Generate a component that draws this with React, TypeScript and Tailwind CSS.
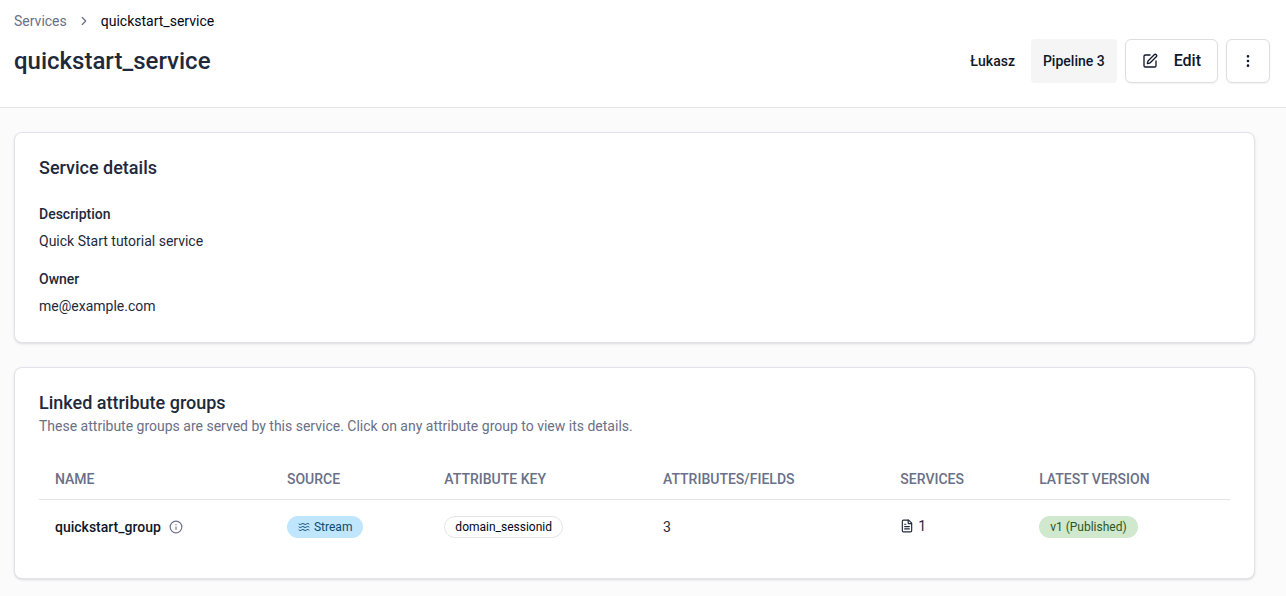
import React from "react";
import {
  ChevronRight,
  EllipsisVertical,
  FileText,
  Info,
  SquarePen,
  Waves,
} from "lucide-react";

interface AttributeGroup {
  name: string;
  source: string;
  attributeKey: string;
  fields: number;
  services: number;
  latestVersion: string;
}

const groups: AttributeGroup[] = [
  {
    name: "quickstart_group",
    source: "Stream",
    attributeKey: "domain_sessionid",
    fields: 3,
    services: 1,
    latestVersion: "v1 (Published)",
  },
];

const columns = [
  "Name",
  "Source",
  "Attribute key",
  "Attributes/Fields",
  "Services",
  "Latest version",
];

const badge =
  "inline-flex h-[22px] items-center gap-1 rounded-full border px-2.5 text-xs";

function Card({ children }: { children: React.ReactNode }) {
  return (
    <section className="rounded-lg border border-[#e2e3e8] bg-white p-6 shadow-sm">
      {children}
    </section>
  );
}

function Detail({ label, value }: { label: string; value: string }) {
  return (
    <div className="flex flex-col gap-[7px]">
      <dt className="font-medium">{label}</dt>
      <dd>{value}</dd>
    </div>
  );
}

export default function App() {
  return (
    <div className="min-h-screen bg-[#fbfbfb] font-[Roboto,sans-serif] text-sm text-[#1e293b]">
      <header className="border-b border-[#e4e4e7] bg-white pt-[11px] pr-4 pb-6 pl-3.5">
        <nav aria-label="Breadcrumb">
          <ol className="flex items-center gap-2.5">
            <li>
              <a href="#services" className="text-[#697087]">
                Services
              </a>
            </li>
            <li aria-hidden="true" className="text-[#697087]">
              <ChevronRight size={14} />
            </li>
            <li aria-current="page" className="text-[#020617]">
              quickstart_service
            </li>
          </ol>
        </nav>
        <div className="mt-2 flex items-center justify-between">
          <h1 className="text-2xl font-medium">quickstart_service</h1>
          <div className="flex items-center gap-2 font-medium text-[#0f172a]">
            <span className="px-2">Łukasz</span>
            <span className="flex h-11 items-center rounded-sm bg-[#f5f5f5] px-3">
              Pipeline 3
            </span>
            <button
              type="button"
              className="flex h-11 items-center gap-4 rounded-md border border-[#dedee0] bg-white px-4 text-base font-medium shadow-xs"
            >
              <SquarePen size={16} />
              Edit
            </button>
            <button
              type="button"
              aria-label="More actions"
              className="flex size-11 items-center justify-center rounded-md border border-[#dedee0] bg-white shadow-xs"
            >
              <EllipsisVertical size={16} />
            </button>
          </div>
        </div>
      </header>

      <main className="flex flex-col gap-6 py-6 pr-[31px] pl-3.5">
        <Card>
          <h2 className="text-lg leading-[22px] font-medium">
            Service details
          </h2>
          <dl className="mt-[25px] mb-0.5 flex flex-col gap-[18px]">
            <Detail label="Description" value="Quick Start tutorial service" />
            <Detail label="Owner" value="me@example.com" />
          </dl>
        </Card>

        <Card>
          <h2 className="text-lg leading-[22px] font-medium">
            Linked attribute groups
          </h2>
          <p className="mt-0.5 text-[#697087]">
            These attribute groups are served by this service. Click on any
            attribute group to view its details.
          </p>
          <table className="mt-[23px] w-full text-left">
            <thead>
              <tr className="border-b border-[#e4e4e7]">
                {columns.map((column) => (
                  <th
                    key={column}
                    className="h-10 px-4 font-medium whitespace-nowrap text-[#697087] uppercase"
                  >
                    {column}
                  </th>
                ))}
              </tr>
            </thead>
            <tbody>
              {groups.map((group) => (
                <tr key={group.name} className="h-[55px]">
                  <td className="px-4">
                    <div className="flex items-center gap-2">
                      <span className="font-medium text-[#0f172a]">
                        {group.name}
                      </span>
                      <Info size={14} className="text-[#697087]" />
                    </div>
                  </td>
                  <td className="px-4">
                    <span
                      className={`${badge} border-transparent bg-[#c0e6fd] text-[#0c4a6e]`}
                    >
                      <Waves size={12} />
                      {group.source}
                    </span>
                  </td>
                  <td className="px-4">
                    <span
                      className={`${badge} border-[#e4e4e7] text-[#020617]`}
                    >
                      {group.attributeKey}
                    </span>
                  </td>
                  <td className="px-4">{group.fields}</td>
                  <td className="px-4 pb-0.5">
                    <div className="flex items-center gap-1">
                      <FileText size={14} />
                      {group.services}
                    </div>
                  </td>
                  <td className="px-4">
                    <span
                      className={`${badge} border-transparent bg-[#d0e8cd] text-[#2a5628]`}
                    >
                      {group.latestVersion}
                    </span>
                  </td>
                </tr>
              ))}
            </tbody>
          </table>
        </Card>
      </main>
    </div>
  );
}
